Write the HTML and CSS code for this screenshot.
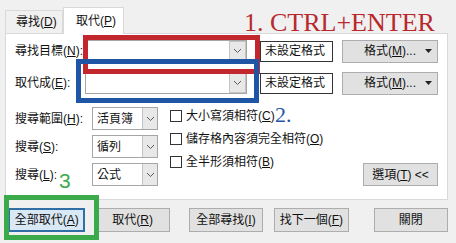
FILE: index.html
```html
<!DOCTYPE html>
<html lang="zh-Hant">
<head>
    <meta charset="UTF-8">
    <title>尋找及取代</title>
    <link rel="stylesheet" href="styles.css">
</head>
<body>
    <div class="dialog">
        <!-- Tabs -->
        <div class="tabs">
            <div class="tab"><span>尋找(<u>D</u>)</span></div>
            <div class="tab active"><span>取代(<u>P</u>)</span></div>
        </div>

        <div class="pane">
            <div class="field-row">
                <div class="field-label">尋找目標(<u>N</u>):</div>
                <div class="combo">
                    <span class="combo-arrow"><svg width="9" height="6" viewBox="0 0 9 6"><polyline points="1,1 4.5,4.5 8,1" fill="none" stroke="#5a5a5a" stroke-width="1"/></svg></span>
                </div>
                <div class="format-box">未設定格式</div>
                <div class="btn btn-format"><span class="btn-text">格式(<u>M</u>)...</span><svg class="caret" width="7" height="4" viewBox="0 0 7 4"><polygon points="0,0 7,0 3.5,4" fill="#222"/></svg></div>
            </div>
            <div class="field-row">
                <div class="field-label">取代成(<u>E</u>):</div>
                <div class="combo">
                    <span class="combo-arrow"><svg width="9" height="6" viewBox="0 0 9 6"><polyline points="1,1 4.5,4.5 8,1" fill="none" stroke="#5a5a5a" stroke-width="1"/></svg></span>
                </div>
                <div class="format-box">未設定格式</div>
                <div class="btn btn-format"><span class="btn-text">格式(<u>M</u>)...</span><svg class="caret" width="7" height="4" viewBox="0 0 7 4"><polygon points="0,0 7,0 3.5,4" fill="#222"/></svg></div>
            </div>

            <div class="search-area">
                <div class="scope">
                    <div class="scope-row">
                        <div class="scope-label">搜尋範圍(<u>H</u>):</div>
                        <div class="select"><span class="select-text">活頁簿</span><span class="select-arrow"><svg width="9" height="6" viewBox="0 0 9 6"><polyline points="1,1 4.5,4.5 8,1" fill="none" stroke="#5a5a5a" stroke-width="1"/></svg></span></div>
                    </div>
                    <div class="scope-row">
                        <div class="scope-label">搜尋(<u>S</u>):</div>
                        <div class="select"><span class="select-text">循列</span><span class="select-arrow"><svg width="9" height="6" viewBox="0 0 9 6"><polyline points="1,1 4.5,4.5 8,1" fill="none" stroke="#5a5a5a" stroke-width="1"/></svg></span></div>
                    </div>
                    <div class="scope-row">
                        <div class="scope-label">搜尋(<u>L</u>):</div>
                        <div class="select"><span class="select-text">公式</span><span class="select-arrow"><svg width="9" height="6" viewBox="0 0 9 6"><polyline points="1,1 4.5,4.5 8,1" fill="none" stroke="#5a5a5a" stroke-width="1"/></svg></span></div>
                    </div>
                </div>
                <div class="checks">
                    <div class="check"><span class="check-box"></span><span>大小寫須相符(<u>C</u>)</span></div>
                    <div class="check"><span class="check-box"></span><span>儲存格內容須完全相符(<u>O</u>)</span></div>
                    <div class="check"><span class="check-box"></span><span>全半形須相符(<u>B</u>)</span></div>
                </div>
                <div class="btn btn-options"><span>選項(<u>T</u>) &lt;&lt;</span></div>
            </div>
        </div>

        <!-- Bottom buttons -->
        <div class="actions">
            <div class="btn btn-action btn-default"><span>全部取代(<u>A</u>)</span></div>
            <div class="btn btn-action gap-10"><span>取代(<u>R</u>)</span></div>
            <div class="btn btn-action gap-19"><span>全部尋找(<u>I</u>)</span></div>
            <div class="btn btn-action gap-11"><span>找下一個(<u>F</u>)</span></div>
            <div class="btn btn-action gap-25"><span>關閉</span></div>
        </div>
    </div>

    <!-- Annotations drawn over the dialog -->
    <div class="mark mark-red"></div>
    <div class="mark mark-blue"></div>
    <div class="mark mark-green"></div>
    <div class="note note-1">1. CTRL+ENTER</div>
    <div class="note note-2">2.</div>
    <div class="note note-3">3</div>
</body>
</html>
```

FILE: styles.css
```css
* {
    box-sizing: border-box;
}

html, body {
    margin: 0;
}

body {
    width: 456px;
    height: 243px;
    overflow: hidden;
    position: relative;
    background-color: #f0f0f0;
    font-family: "Liberation Sans", "Noto Sans CJK TC", sans-serif;
    font-size: 12px;
    line-height: 1;
    color: #111;
}

.dialog {
    padding: 0 8px 0 5px;
}

/* Tabs */
.tabs {
    display: flex;
    align-items: flex-end;
    height: 33px;
}

.tab {
    width: 58px;
    height: 23px;
    padding-left: 10px;
    display: flex;
    align-items: center;
    border: 1px solid #d9d9d9;
    border-bottom: none;
    background-color: #f0f0f0;
}

.tab.active {
    width: 61px;
    height: 27px;
    padding-left: 12px;
    margin-bottom: -1px;
    background-color: #fff;
    position: relative;
    z-index: 1;
}

/* Pane */
.pane {
    height: 167px;
    padding: 6px 9px 0 9px;
    background-color: #fff;
    border: 1px solid #d9d9d9;
}

.field-row {
    display: flex;
    align-items: center;
    height: 22px;
}

.field-row + .field-row {
    margin-top: 10px;
}

.field-label {
    width: 70px;
}

.combo {
    width: 162px;
    height: 22px;
    display: flex;
    justify-content: flex-end;
    border: 1px solid #a6a6a6;
    background-color: #fff;
}

.combo-arrow,
.select-arrow {
    width: 17px;
    display: flex;
    align-items: center;
    justify-content: center;
    background-color: #e8e8e8;
    border: 1px solid #c4c4c4;
}

.format-box {
    width: 73px;
    height: 21px;
    margin-left: 13px;
    padding-left: 4px;
    display: flex;
    align-items: center;
    border: 1px solid #333;
    background-color: #fff;
}

.btn {
    display: flex;
    align-items: center;
    justify-content: center;
    height: 23px;
    background-color: #e1e1e1;
    border: 1px solid #adadad;
}

.btn-format {
    width: 96px;
    margin-left: 9px;
    padding: 0 5px 0 12px;
}

.btn-text {
    flex: 1;
    text-align: center;
}

/* Search options */
.search-area {
    display: flex;
    margin-top: 10px;
}

.scope {
    display: flex;
    flex-direction: column;
    gap: 5px;
    padding-top: 3px;
}

.scope-row {
    display: flex;
    align-items: center;
    height: 23px;
}

.scope-label {
    width: 77px;
}

.select {
    width: 66px;
    height: 23px;
    display: flex;
    border: 1px solid #a6a6a6;
    background-color: #fff;
}

.select-text {
    flex: 1;
    padding-left: 4px;
    display: flex;
    align-items: center;
}

.select-arrow {
    width: 15px;
    border-width: 0 0 0 1px;
}

.checks {
    display: flex;
    flex-direction: column;
    margin-left: 12px;
}

.check {
    display: flex;
    align-items: center;
    gap: 4px;
    height: 23px;
}

.check-box {
    width: 12px;
    height: 12px;
    border: 1px solid #333;
    background-color: #fff;
}

.btn-options {
    width: 75px;
    margin-left: auto;
    align-self: flex-end;
}

/* Bottom buttons */
.actions {
    display: flex;
    margin-top: 8px;
    padding-left: 3px;
}

.btn-action {
    width: 75px;
    height: 24px;
}

.btn-default {
    width: 78px;
    background-color: #d9e8f5;
    border: 2px solid #2f6fa5;
}

.gap-10 { margin-left: 10px; }
.gap-19 { margin-left: 19px; }
.gap-11 { margin-left: 11px; }
.gap-25 { margin-left: 25px; }

/* Annotations */
.mark {
    position: absolute;
    border-style: solid;
    border-width: 5px;
}

.mark-red {
    left: 83px;
    top: 35px;
    width: 177px;
    height: 39px;
    border-color: #c1272d;
}

.mark-blue {
    left: 76px;
    top: 59px;
    width: 183px;
    height: 44px;
    border-color: #1f55a5;
}

.mark-green {
    left: 4px;
    top: 195px;
    width: 95px;
    height: 45px;
    border-color: #3aaa4a;
}

.note {
    position: absolute;
    line-height: 1;
    white-space: nowrap;
}

.note-1 {
    left: 244px;
    top: 10px;
    font-family: "Liberation Serif", serif;
    font-size: 26px;
    color: #b8282d;
}

.note-2 {
    left: 275px;
    top: 104px;
    font-family: "Liberation Serif", serif;
    font-size: 22px;
    color: #1f55a5;
}

.note-3 {
    left: 59px;
    top: 170px;
    font-family: "Liberation Sans", sans-serif;
    font-size: 21px;
    color: #3aaa4a;
}
```
